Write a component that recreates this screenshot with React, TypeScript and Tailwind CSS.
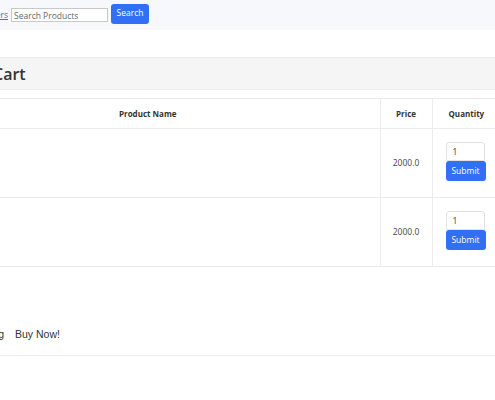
import React from "react";

const sans = { fontFamily: '"Open Sans", "Noto Sans", sans-serif' };

function Row() {
  return (
    <tr className="h-[69px] border-b border-[#ececec]">
      <td className="border-r border-[#ececec]"></td>
      <td className="border-r border-[#ececec] text-center text-[8.5px] text-[#444]">2000.0</td>
      <td className="pl-[13px] pt-[13px] align-top">
        <div className="flex w-[40px] flex-col">
          <input
            defaultValue="1"
            className="h-[19px] w-[39px] rounded-t-[3px] border border-[#e2e2e2] bg-white pl-[6px] text-[8.5px] text-[#333] outline-none"
          />
          <button className="h-[20px] w-[40px] rounded-[3px] bg-[#3170f5] text-[8.5px] text-white">Submit</button>
        </div>
      </td>
    </tr>
  );
}

export default function App() {
  return (
    <div className="h-[400px] w-[495px] overflow-hidden bg-white" style={sans}>
      <div className="ml-[-100px] w-[600px]">
        <div className="flex h-[30px] items-center bg-[#f6f8fb]">
          <div className="flex w-[108px] justify-end">
            <a className="text-[8.5px] text-[#5a6f9a] underline">Orders</a>
          </div>
          <input
            placeholder="Search Products"
            className="ml-[3px] h-[14px] w-[97px] border border-[#c9c9c9] bg-white px-[2px] text-[8.5px] text-[#333] placeholder:text-[#666] outline-none"
          />
          <button className="mb-[3px] ml-[3px] h-[20px] w-[38px] rounded-[3px] bg-[#3170f5] text-[8.5px] text-white">Search</button>
        </div>
        <div className="h-[27px]"></div>
        <div className="flex h-[33px] items-center border-y border-[#ebebeb] bg-[#f5f5f5] pl-[93px]">
          <span className="text-[16px] font-semibold text-[#333]">Cart</span>
        </div>
        <div className="h-[8px]"></div>
        <table className="ml-[16px] w-[582px] border-collapse">
          <thead>
            <tr className="h-[30px] border-y border-[#ececec]">
              <th className="w-[464px] border-r border-[#ececec] text-center text-[8px] font-bold text-[#333]">Product Name</th>
              <th className="w-[52px] border-r border-[#ececec] text-center text-[8px] font-bold text-[#333]">Price</th>
              <th className="w-[66px] pl-[16px] text-left text-[8px] font-bold text-[#333]">Quantity</th>
            </tr>
          </thead>
          <tbody>
            <Row />
            <Row />
          </tbody>
        </table>
        <div
          className="mt-[61px] flex h-[28px] items-start border-b border-[#ececec] text-[10.5px] leading-[12px] text-[#333]"
          style={{ fontFamily: '"Liberation Sans", Arial, sans-serif' }}
        >
          <div className="flex w-[104px] justify-end">Keep Shopping</div>
          <span className="ml-[11px]">Buy Now!</span>
        </div>
      </div>
    </div>
  );
}
